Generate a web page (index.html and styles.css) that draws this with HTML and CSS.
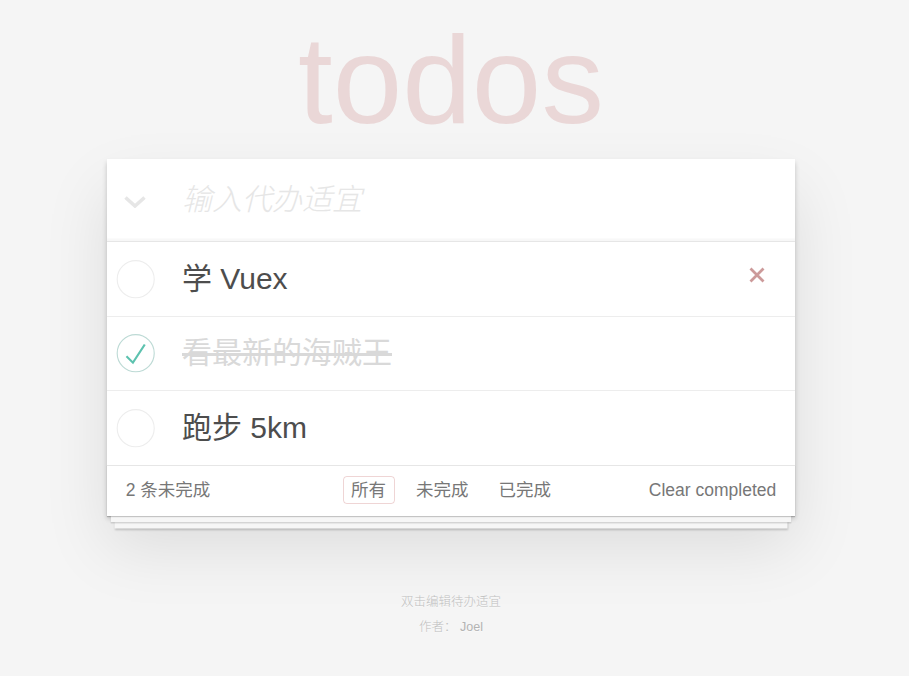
FILE: index.html
```html
<!DOCTYPE html>
<html lang="zh-CN">
<head>
<meta charset="utf-8">
<title>todos</title>
<link rel="stylesheet" href="styles.css">
</head>
<body>
<div class="page">
  <h1 class="title">todos</h1>
  <section class="todoapp">
    <header class="header">
      <div class="toggle-all">
        <svg width="22" height="12" viewBox="0 0 22 12"><polyline points="1.5,1.5 11,10 20.5,1.5" fill="none" stroke="#e6e6e6" stroke-width="3.6" stroke-linejoin="miter"/></svg>
      </div>
      <input class="new-todo" type="text" placeholder="输入代办适宜">
    </header>
    <ul class="todo-list">
      <li class="todo">
        <svg class="toggle" width="50" height="50" viewBox="-10 -18 100 135"><circle cx="50" cy="50" r="50" fill="none" stroke="#ededed" stroke-width="3"/></svg>
        <label class="todo-label">学 Vuex</label>
        <svg class="destroy" width="16" height="16" viewBox="0 0 16 16"><path d="M1.5 1.5L14.5 14.5M14.5 1.5L1.5 14.5" stroke="#cc9a9a" stroke-width="2.8" fill="none"/></svg>
      </li>
      <li class="todo completed">
        <svg class="toggle" width="50" height="50" viewBox="-10 -18 100 135"><circle cx="50" cy="50" r="50" fill="none" stroke="#bddad5" stroke-width="3"/><path fill="#5dc2af" d="M72 25L42 71 27 56l-4 4 20 20 34-52z"/></svg>
        <label class="todo-label">看最新的海贼王</label>
      </li>
      <li class="todo">
        <svg class="toggle" width="50" height="50" viewBox="-10 -18 100 135"><circle cx="50" cy="50" r="50" fill="none" stroke="#ededed" stroke-width="3"/></svg>
        <label class="todo-label">跑步 5km</label>
      </li>
    </ul>
    <footer class="footer">
      <span class="todo-count">2 条未完成</span>
      <ul class="filters">
        <li><a class="filter selected" href="#/all">所有</a></li>
        <li><a class="filter" href="#/active">未完成</a></li>
        <li><a class="filter" href="#/completed">已完成</a></li>
      </ul>
      <button class="clear-completed">Clear completed</button>
    </footer>
  </section>
  <footer class="info">
    <p>双击编辑待办适宜</p>
    <p>作者： <a class="author" href="#">Joel</a></p>
  </footer>
</div>
</body>
</html>
```

FILE: styles.css
```css
html, body {
  margin: 0;
  padding: 0;
}

body {
  background: #f5f5f5;
  color: #4d4d4d;
  font-family: "Liberation Sans", "Noto Sans CJK SC", sans-serif;
  font-size: 17.5px;
}

.page {
  padding: 17px 7px 0 0;
}

.title {
  margin: 0 0 17px;
  height: 125px;
  font-size: 125px;
  line-height: 125px;
  font-weight: 400;
  text-align: center;
  color: rgba(175, 47, 47, 0.15);
}

.todoapp {
  width: 688px;
  margin: 0 auto;
  background: #fff;
  box-shadow: 0 2.5px 5px 0 rgba(0, 0, 0, 0.2), 0 31px 62px 0 rgba(0, 0, 0, 0.1);
}

.header {
  display: flex;
  align-items: center;
  height: 82px;
  box-shadow: inset 0 -2.5px 1px rgba(0, 0, 0, 0.03);
}

.toggle-all {
  width: 75px;
  box-sizing: border-box;
  padding: 4px 0 0 17px;
  display: flex;
  align-items: center;
}

.toggle-all svg {
  display: block;
}

.new-todo {
  flex: 1;
  min-width: 0;
  height: 82px;
  margin: 0;
  padding: 0 20px 0 0;
  border: none;
  outline: none;
  background: transparent;
  font-family: "Liberation Sans", "Noto Sans CJK SC", sans-serif;
  font-size: 30px;
  color: #4d4d4d;
}

.new-todo::placeholder {
  font-style: italic;
  font-weight: 300;
  color: #e6e6e6;
}

.todo-list {
  margin: 0;
  padding: 0;
  list-style: none;
  border-top: 1px solid #e6e6e6;
}

.todo {
  display: flex;
  align-items: center;
  border-bottom: 1px solid #ededed;
}

.todo:last-child {
  border-bottom: none;
}

.toggle {
  flex: none;
  display: block;
  margin-right: 25px;
}

.todo-label {
  flex: 1;
  padding: 18.75px 18.75px 18.75px 0;
  font-size: 30px;
  line-height: 36px;
  color: #4d4d4d;
  word-break: break-all;
}

.todo.completed .todo-label {
  color: #d9d9d9;
  text-decoration: line-through;
}

.destroy {
  flex: none;
  display: block;
  margin: 0 30px 7px 0;
}

.footer {
  display: grid;
  grid-template-columns: 1fr auto 1fr;
  align-items: center;
  box-sizing: border-box;
  height: 51px;
  padding: 0 18.75px 1px;
  border-top: 1px solid #e6e6e6;
  color: #777;
  font-size: 17.5px;
  line-height: 20px;
  box-shadow: 0 1px 1px rgba(0, 0, 0, 0.2),
    0 10px 0 -3.75px #f6f6f6,
    0 11px 1px -3.75px rgba(0, 0, 0, 0.2),
    0 20px 0 -7.5px #f6f6f6,
    0 21px 2px -7.5px rgba(0, 0, 0, 0.2);
}

.todo-count {
  justify-self: start;
}

.filters {
  display: flex;
  gap: 13px;
  margin: 0;
  padding: 0;
  list-style: none;
}

.filter {
  display: block;
  padding: 3px 7.5px;
  line-height: 20px;
  border: 1px solid transparent;
  border-radius: 3.75px;
  color: inherit;
  text-decoration: none;
}

.filter.selected {
  border-color: rgba(175, 47, 47, 0.2);
}

.clear-completed {
  justify-self: end;
  margin: 0;
  padding: 0;
  border: none;
  background: none;
  font-family: "Liberation Sans", "Noto Sans CJK SC", sans-serif;
  font-size: 17.5px;
  line-height: 20px;
  color: #777;
}

.info {
  margin: 80.5px auto 0;
  color: #bfbfbf;
  font-size: 12.5px;
  font-weight: 300;
  text-align: center;
  text-shadow: 0 1px 0 rgba(255, 255, 255, 0.5);
}

.info p {
  margin: 0 0 12.5px;
  line-height: 12.5px;
}

.author {
  color: #b3b3b3;
  font-weight: 400;
  text-decoration: none;
}
```
